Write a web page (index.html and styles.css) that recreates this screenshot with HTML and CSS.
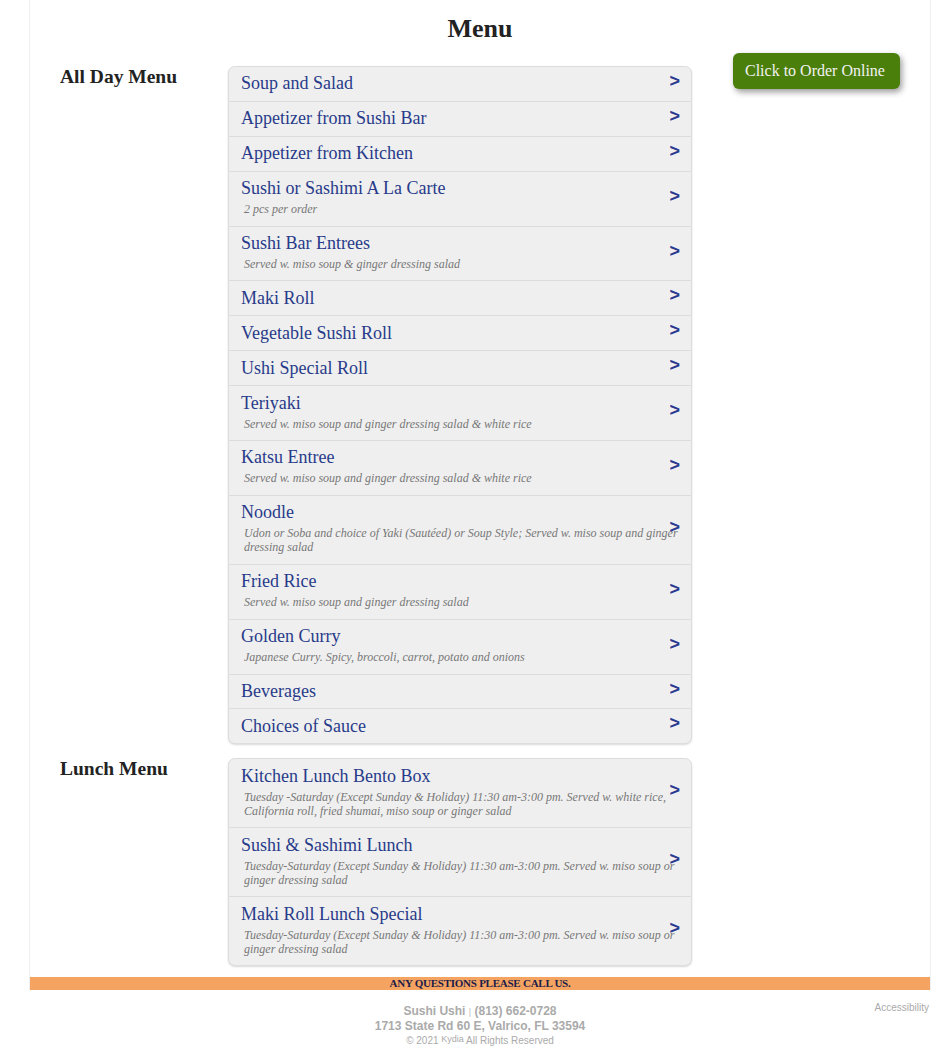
FILE: index.html
```html
<!DOCTYPE html>
<html lang="en">
<head>
    <meta charset="UTF-8">
    <title>Menu - Sushi Ushi</title>
    <link rel="stylesheet" href="styles.css">
</head>
<body>
    <div id="pagina">
        <h1>Menu</h1>

        <div class="seccion">
            <h2>All Day Menu</h2>
            <div class="lista">
                <div class="fila"><div class="nombre">Soup and Salad</div><span class="flecha">&gt;</span></div>
                <div class="fila"><div class="nombre">Appetizer from Sushi Bar</div><span class="flecha">&gt;</span></div>
                <div class="fila"><div class="nombre">Appetizer from Kitchen</div><span class="flecha">&gt;</span></div>
                <div class="fila">
                    <div class="nombre">Sushi or Sashimi A La Carte</div>
                    <div class="desc">2 pcs per order</div>
                    <span class="flecha">&gt;</span>
                </div>
                <div class="fila">
                    <div class="nombre">Sushi Bar Entrees</div>
                    <div class="desc">Served w. miso soup &amp; ginger dressing salad</div>
                    <span class="flecha">&gt;</span>
                </div>
                <div class="fila"><div class="nombre">Maki Roll</div><span class="flecha">&gt;</span></div>
                <div class="fila"><div class="nombre">Vegetable Sushi Roll</div><span class="flecha">&gt;</span></div>
                <div class="fila"><div class="nombre">Ushi Special Roll</div><span class="flecha">&gt;</span></div>
                <div class="fila">
                    <div class="nombre">Teriyaki</div>
                    <div class="desc">Served w. miso soup and ginger dressing salad &amp; white rice</div>
                    <span class="flecha">&gt;</span>
                </div>
                <div class="fila">
                    <div class="nombre">Katsu Entree</div>
                    <div class="desc">Served w. miso soup and ginger dressing salad &amp; white rice</div>
                    <span class="flecha">&gt;</span>
                </div>
                <div class="fila">
                    <div class="nombre">Noodle</div>
                    <div class="desc">Udon or Soba and choice of Yaki (Sautéed) or Soup Style; Served w. miso soup and ginger dressing salad</div>
                    <span class="flecha">&gt;</span>
                </div>
                <div class="fila">
                    <div class="nombre">Fried Rice</div>
                    <div class="desc">Served w. miso soup and ginger dressing salad</div>
                    <span class="flecha">&gt;</span>
                </div>
                <div class="fila">
                    <div class="nombre">Golden Curry</div>
                    <div class="desc">Japanese Curry. Spicy, broccoli, carrot, potato and onions</div>
                    <span class="flecha">&gt;</span>
                </div>
                <div class="fila"><div class="nombre">Beverages</div><span class="flecha">&gt;</span></div>
                <div class="fila"><div class="nombre">Choices of Sauce</div><span class="flecha">&gt;</span></div>
            </div>
            <div class="lateral">
                <a class="boton" href="#">Click to Order Online</a>
            </div>
        </div>

        <div class="seccion ultima">
            <h2>Lunch Menu</h2>
            <div class="lista">
                <div class="fila">
                    <div class="nombre">Kitchen Lunch Bento Box</div>
                    <div class="desc">Tuesday -Saturday (Except Sunday &amp; Holiday) 11:30 am-3:00 pm. Served w. white rice, California roll, fried shumai, miso soup or ginger salad</div>
                    <span class="flecha">&gt;</span>
                </div>
                <div class="fila">
                    <div class="nombre">Sushi &amp; Sashimi Lunch</div>
                    <div class="desc">Tuesday-Saturday (Except Sunday &amp; Holiday) 11:30 am-3:00 pm. Served w. miso soup or ginger dressing salad</div>
                    <span class="flecha">&gt;</span>
                </div>
                <div class="fila">
                    <div class="nombre">Maki Roll Lunch Special</div>
                    <div class="desc">Tuesday-Saturday (Except Sunday &amp; Holiday) 11:30 am-3:00 pm. Served w. miso soup or ginger dressing salad</div>
                    <span class="flecha">&gt;</span>
                </div>
            </div>
            <div class="lateral"></div>
        </div>

        <div class="aviso">ANY QUESTIONS PLEASE CALL US.</div>
    </div>

    <footer>
        <div></div>
        <div class="datos">
            <p class="linea"><b>Sushi Ushi</b> <span class="sep">|</span> <b>(813) 662-0728</b></p>
            <p class="linea"><b>1713 State Rd 60 E, Valrico, FL 33594</b></p>
            <p class="copy">© 2021 <sup>Kydia</sup> All Rights Reserved</p>
        </div>
        <div class="acceso">Accessibility</div>
    </footer>
</body>
</html>
```

FILE: styles.css
```css
body {
    font-family: 'Liberation Serif', 'Times New Roman', serif;
    margin: 0;
    padding: 0;
    background: #fff;
    color: #222;
}
#pagina {
    width: 900px;
    margin-left: 29px;
    border-left: 1px solid #eee;
    border-right: 1px solid #eee;
}
h1 {
    font-size: 26px;
    line-height: 30px;
    text-align: center;
    margin: 0 0 22px 0;
    padding-top: 14px;
    color: #222;
}
.seccion {
    display: grid;
    grid-template-columns: 198px 464px 1fr;
    margin-bottom: 14px;
}
.seccion.ultima {
    margin-bottom: 11px;
}
.seccion h2 {
    font-size: 19.5px;
    line-height: 22px;
    margin: 0;
    padding-left: 30px;
}
.lista {
    background: #efefef;
    border: 1px solid #ddd;
    border-radius: 7px;
    box-shadow: 0 1px 2px rgba(0,0,0,0.15);
    overflow: hidden;
}
.fila {
    position: relative;
    padding: 6.4px 10px 7.5px 12px;
    border-top: 1px solid #dcdcdc;
}
.fila:first-child {
    border-top: none;
}
.nombre {
    font-size: 18px;
    line-height: 20px;
    color: #283b8a;
}
.desc {
    font-size: 12px;
    line-height: 14px;
    font-style: italic;
    color: #777;
    margin: 4px 0 2px 3px;
}
.flecha {
    position: absolute;
    right: 11px;
    top: 50%;
    transform: translateY(-50%);
    margin-top: -3px;
    font-family: 'Liberation Sans', Arial, sans-serif;
    font-weight: bold;
    font-size: 18px;
    line-height: 20px;
    color: #2a3990;
}
.lateral {
    padding-left: 41px;
}
.boton {
    display: block;
    width: max-content;
    margin-top: -13px;
    height: 36px;
    line-height: 36px;
    padding: 0 15px 0 12px;
    background: #4b7f0b;
    color: #f2f2f2;
    font-size: 16px;
    text-decoration: none;
    border-radius: 6px;
    box-shadow: 2px 3px 6px rgba(0,0,0,0.4);
}
.aviso {
    background: #f4a460;
    color: #1c1c4a;
    text-align: center;
    font-size: 11px;
    font-weight: bold;
    letter-spacing: -0.25px;
    line-height: 13px;
}
footer {
    width: 902px;
    margin-left: 29px;
    display: grid;
    grid-template-columns: 1fr auto 1fr;
    font-family: 'Liberation Sans', Arial, sans-serif;
    color: #aaa;
}
.datos {
    text-align: center;
    padding-top: 14px;
}
.linea {
    margin: 0;
    font-size: 12px;
    line-height: 14px;
}
.sep {
    font-size: 9px;
    color: #bbb;
}
.copy {
    margin: -1px 0 0 0;
    font-size: 10px;
    line-height: 14px;
}
.copy sup {
    font-size: 9px;
    vertical-align: 2px;
}
.acceso {
    text-align: right;
    font-size: 10px;
    padding: 12px 2px 0 0;
}
```
